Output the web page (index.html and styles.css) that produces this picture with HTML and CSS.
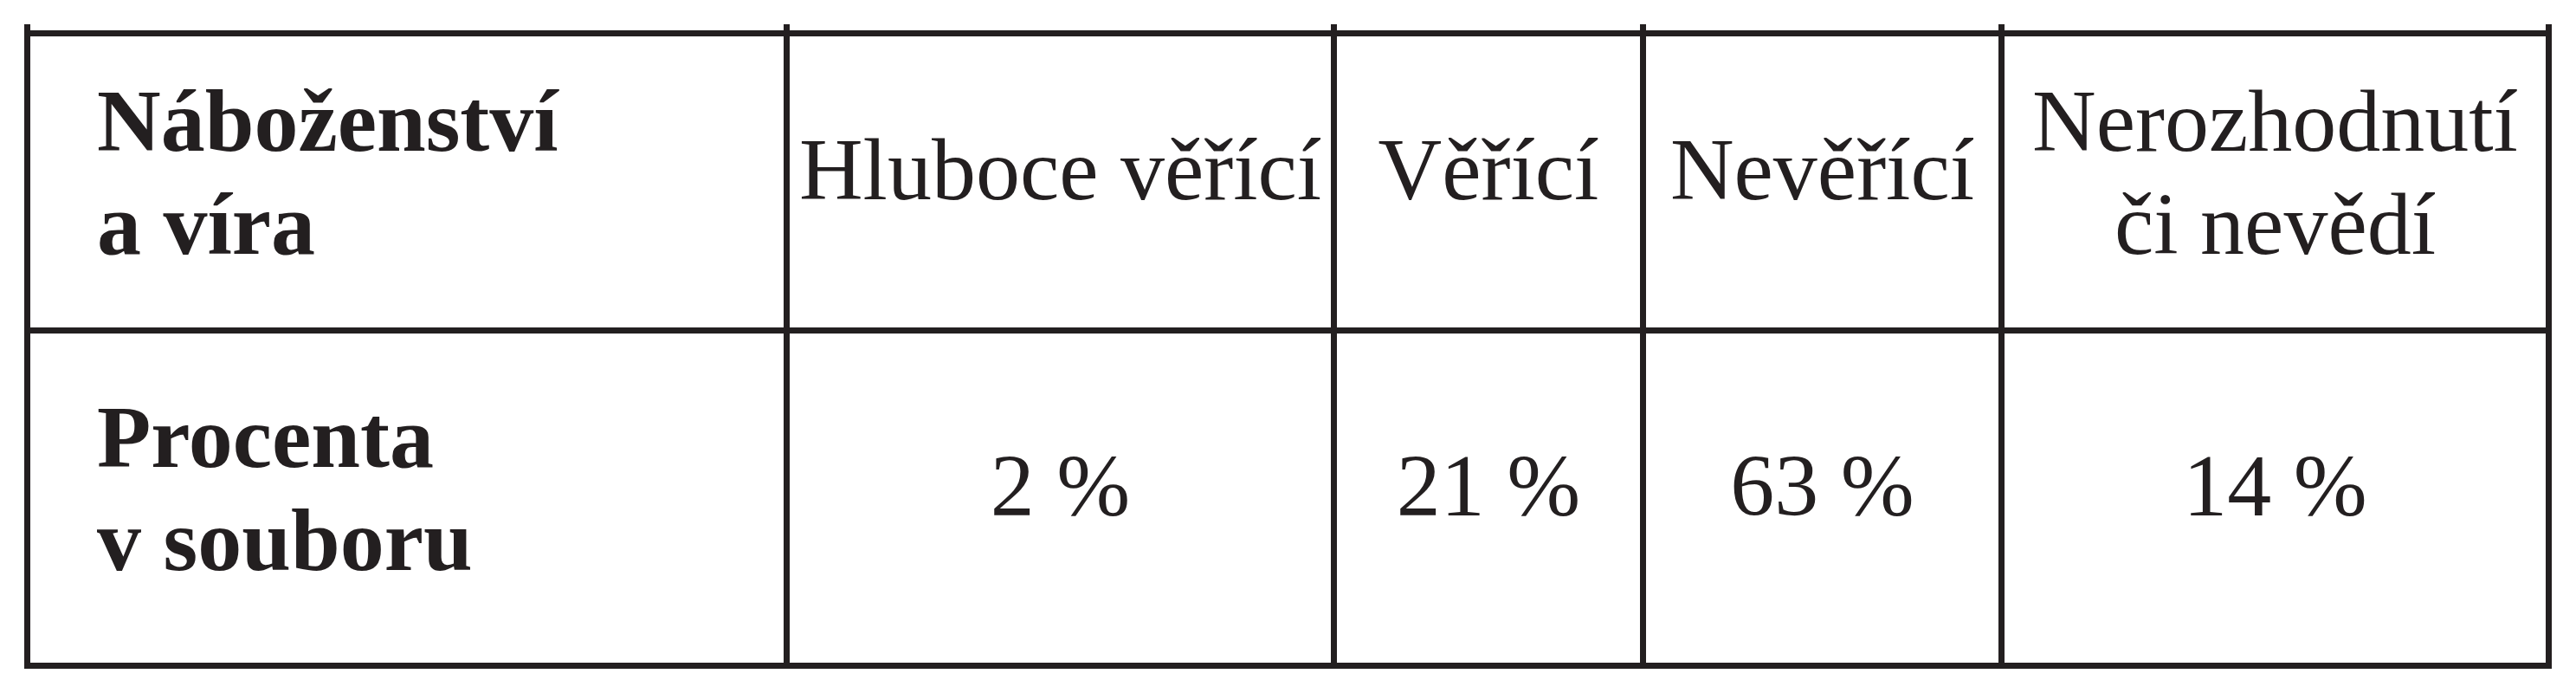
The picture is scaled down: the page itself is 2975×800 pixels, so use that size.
FILE: index.html
```html
<!DOCTYPE html>
<html lang="cs">
<head>
<meta charset="utf-8">
<title>Náboženství a víra</title>
<link rel="stylesheet" href="styles.css">
</head>
<body>
<table class="survey">
  <colgroup>
    <col class="c1">
    <col class="c2">
    <col class="c3">
    <col class="c4">
    <col class="c5">
  </colgroup>
  <thead>
    <tr class="ticks" aria-hidden="true">
      <td></td><td></td><td></td><td></td><td class="last"></td>
    </tr>
    <tr class="head-row">
      <th class="label">Náboženství<br>a víra</th>
      <th class="single">Hluboce věřící</th>
      <th class="single">Věřící</th>
      <th class="single">Nevěřící</th>
      <th class="last">Nerozhodnutí<br>či nevědí</th>
    </tr>
  </thead>
  <tbody>
    <tr class="body-row">
      <th class="label">Procenta<br>v souboru</th>
      <td class="single">2 %</td>
      <td class="single">21 %</td>
      <td class="single">63 %</td>
      <td class="single last">14 %</td>
    </tr>
  </tbody>
</table>
</body>
</html>
```
FILE: styles.css
```css
html, body {
  margin: 0;
  padding: 0;
  background: #ffffff;
}

body {
  width: 2975px;
  height: 800px;
  overflow: hidden;
}

.survey {
  margin: 28px 0 0 28px;
  width: 2919px;
  table-layout: fixed;
  border-collapse: separate;
  border-spacing: 0;
  font-family: "Liberation Serif", "Times New Roman", serif;
  font-size: 102px;
  line-height: 119px;
  color: #231f20;
}

.c1 { width: 877px; }
.c2 { width: 632px; }
.c3 { width: 357px; }
.c4 { width: 414px; }
.c5 { width: 639px; }

.survey th,
.survey td {
  border-left: 7px solid #231f20;
  border-bottom: 7px solid #231f20;
  padding: 0;
  text-align: center;
  vertical-align: middle;
  font-weight: normal;
  white-space: nowrap;
}

.survey .last {
  border-right: 7px solid #231f20;
}

/* short stubs of the vertical rules above the top line */
.ticks td {
  height: 7px;
  border-bottom: 0;
  font-size: 0;
  line-height: 0;
}

.head-row th {
  border-top: 7px solid #231f20;
  padding-top: 38px;
  padding-bottom: 60px;
}

.body-row th,
.body-row td {
  padding-top: 60px;
  padding-bottom: 82px;
}

.survey .label {
  text-align: left;
  font-weight: bold;
  padding-left: 77px;
}

.head-row .single {
  padding-bottom: 67px;
}

.body-row .single {
  padding-bottom: 89px;
}
```
